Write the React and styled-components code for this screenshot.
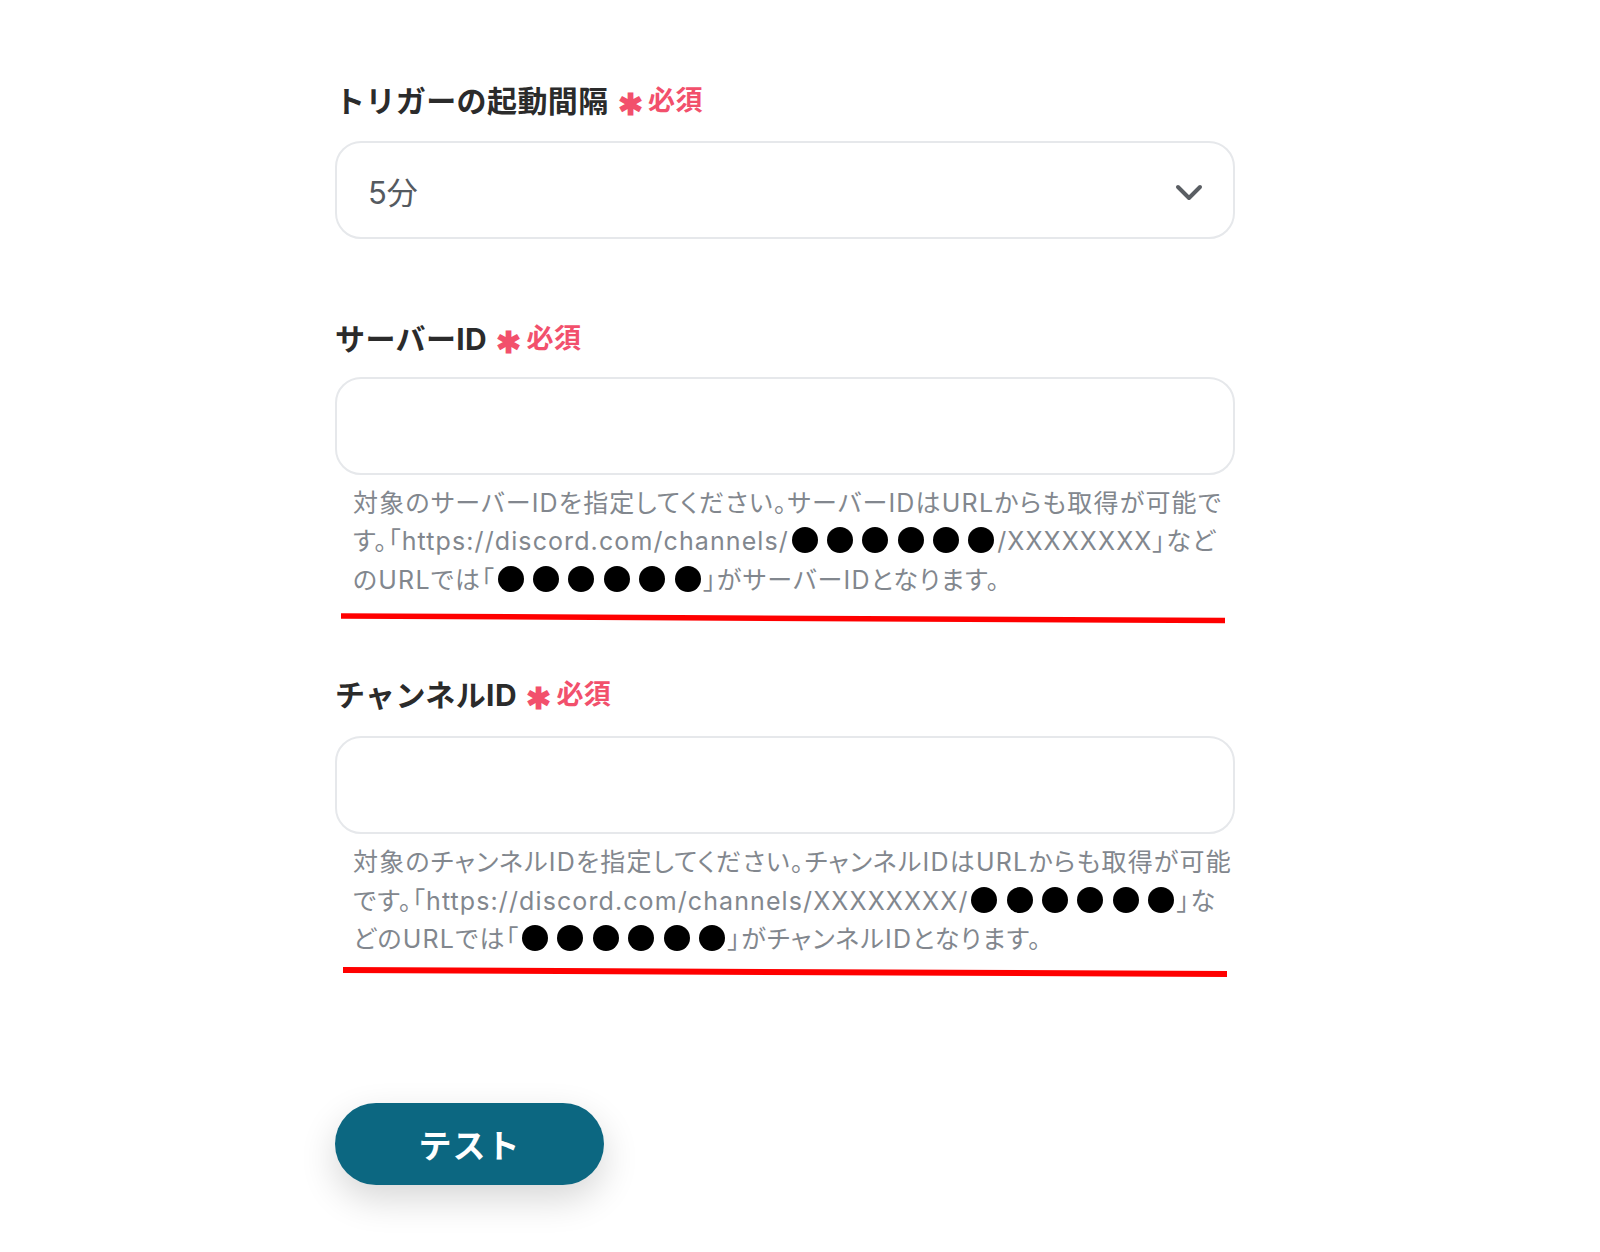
import React from 'react'
import styled, { createGlobalStyle } from 'styled-components'

const GlobalStyle = createGlobalStyle`
  html, body {
    margin: 0;
    padding: 0;
    background: #ffffff;
  }
  body {
    font-family: "Inter", "Noto Sans CJK JP", sans-serif;
  }
`

const Page = styled.div`
  min-height: 1252px;
  padding: 76px 0 0 335px;
  box-sizing: border-box;
`

const Form = styled.div`
  width: 900px;
  display: flex;
  flex-direction: column;
`

const Field = styled.div`
  display: flex;
  flex-direction: column;
  margin-top: ${props => props.top || 0}px;
`

const Label = styled.label`
  display: flex;
  align-items: center;
  height: 45px;
  font-size: 30px;
  font-weight: 700;
  color: #2b2b2b;
  letter-spacing: 0.4px;
  margin-bottom: ${props => props.below || 19}px;
`

const Required = styled.span`
  display: inline-flex;
  align-items: center;
  color: #f2506c;
  font-size: 27px;
  font-weight: 600;
  margin-left: 9px;
`

const Star = styled.span`
  font-family: "Noto Sans CJK JP", sans-serif;
  font-size: 30px;
  margin-right: 5px;
  transform: translateY(3px);
`

const SelectBox = styled.div`
  height: 98px;
  box-sizing: border-box;
  border: 2px solid #e6e8eb;
  border-radius: 26px;
  display: flex;
  align-items: center;
  justify-content: space-between;
  padding: 0 30px 0 31px;
  font-size: 31px;
  color: #555a60;
`

const TextInput = styled.div`
  height: 98px;
  box-sizing: border-box;
  border: 2px solid #e6e8eb;
  border-radius: 26px;
`

const Help = styled.div`
  padding: 9px 0 0 18px;
  font-size: 25px;
  line-height: 38.4px;
  color: #82878e;
  font-feature-settings: "palt";
  letter-spacing: 1.2px;
`

const Line = styled.span`
  display: block;
  height: 38.4px;
  white-space: nowrap;
`

const Url = styled.span`
  letter-spacing: 1.1px;
`

const Dots = styled.span`
  display: inline-flex;
  align-items: center;
  gap: 8px;
  margin: 0 2px;
  vertical-align: -3px;
`

const Dot = styled.span`
  width: 26px;
  height: 26px;
  border-radius: 50%;
  background: #000;
  display: inline-block;
  margin: 0 0.7px;
`

const Mark = styled.svg`
  display: block;
  margin: ${props => props.top}px 0 0 ${props => props.left}px;
`

const Button = styled.button`
  margin-top: 124px;
  width: 269px;
  height: 82px;
  border: none;
  border-radius: 41px;
  background: #0c6781;
  color: #ffffff;
  font-family: "Noto Sans CJK JP", sans-serif;
  font-size: 33px;
  font-weight: 700;
  letter-spacing: 1px;
  box-shadow: 0 14px 36px rgba(0, 0, 0, 0.16);
  cursor: pointer;
`

const Chevron = () => (
  <svg width="28" height="20" viewBox="0 0 28 20" fill="none" style={{ marginTop: 6 }}>
    <path d="M3 4l11 11L25 4" stroke="#5a5e63" strokeWidth="4" strokeLinecap="round" strokeLinejoin="round" />
  </svg>
)

const Underline = ({ top, left, drop, width }) => (
  <Mark top={top} left={left} width="890" height="12" viewBox="0 0 890 12">
    <line x1="0" y1="3" x2="884" y2={3 + drop} stroke="#ff0000" strokeWidth={width} />
  </Mark>
)

const RequiredMark = () => (
  <Required>
    <Star>✱</Star>必須
  </Required>
)

const Masked = () => (
  <Dots>
    {[0, 1, 2, 3, 4, 5].map(i => <Dot key={i} />)}
  </Dots>
)

const App = () => (
  <Page>
    <GlobalStyle />
    <Form>
      <Field>
        <Label below={20}>
          トリガーの起動間隔
          <RequiredMark />
        </Label>
        <SelectBox>
          <span>5分</span>
          <Chevron />
        </SelectBox>
      </Field>

      <Field top={75}>
        <Label below={18}>
          サーバーID
          <RequiredMark />
        </Label>
        <TextInput />
        <Help>
          <Line>対象のサーバーIDを指定してください。サーバーIDはURLからも取得が可能で</Line>
          <Line>
            す。「<Url>https://discord.com/channels/</Url><Masked /><Url>/XXXXXXXX</Url>」など
          </Line>
          <Line>
            のURLでは「<Masked />」がサーバーIDとなります。
          </Line>
        </Help>
        <Underline top={14} left={6} drop={4.5} width={5.5} />
      </Field>

      <Field top={45}>
        <Label below={21}>
          チャンネルID
          <RequiredMark />
        </Label>
        <TextInput />
        <Help>
          <Line>対象のチャンネルIDを指定してください。チャンネルIDはURLからも取得が可能</Line>
          <Line>
            です。「<Url>https://discord.com/channels/XXXXXXXX/</Url><Masked />」な
          </Line>
          <Line>
            どのURLでは「<Masked />」がチャンネルIDとなります。
          </Line>
        </Help>
        <Underline top={9} left={8} drop={4} width={6} />
      </Field>

      <div>
        <Button>テスト</Button>
      </div>
    </Form>
  </Page>
)

export default App
